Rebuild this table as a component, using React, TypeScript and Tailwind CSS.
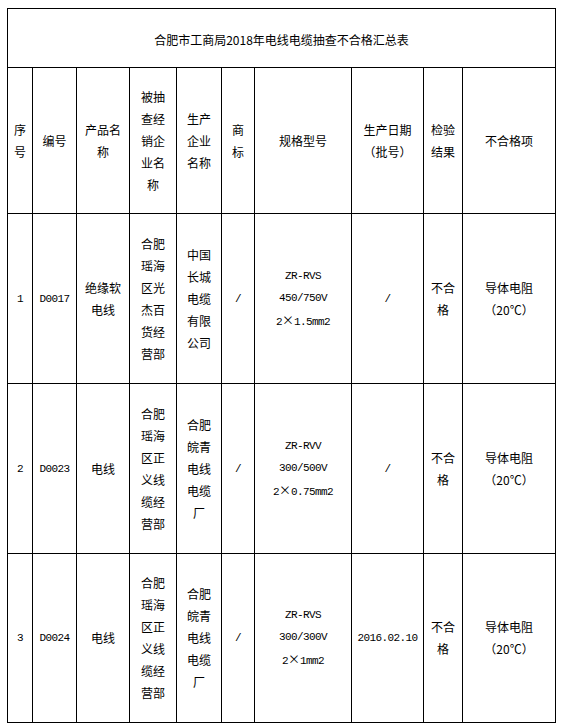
import { Fragment } from "react";

const cjk = "font-['Noto_Sans_CJK_SC',sans-serif]";
const mono = "font-['Liberation_Mono','Noto_Sans_CJK_SC',monospace] text-[11px] tracking-[-0.6px]";

type Row = {
  no: string;
  code: string;
  product: string[];
  seller: string[];
  maker: string[];
  brand: string;
  spec: React.ReactNode[];
  date: string;
  result: string[];
  defect: string[];
};

const X = <span className={`${cjk} text-[12px] tracking-normal`}>×</span>;

const rows: Row[] = [
  {
    no: "1",
    code: "D0017",
    product: ["绝缘软", "电线"],
    seller: ["合肥", "瑶海", "区光", "杰百", "货经", "营部"],
    maker: ["中国", "长城", "电缆", "有限", "公司"],
    brand: "/",
    spec: ["ZR-RVS", "450/750V", <>2{X}1.5mm2</>],
    date: "/",
    result: ["不合", "格"],
    defect: ["导体电阻", "（20℃）"],
  },
  {
    no: "2",
    code: "D0023",
    product: ["电线"],
    seller: ["合肥", "瑶海", "区正", "义线", "缆经", "营部"],
    maker: ["合肥", "皖青", "电线", "电缆", "厂"],
    brand: "/",
    spec: ["ZR-RVV", "300/500V", <>2{X}0.75mm2</>],
    date: "/",
    result: ["不合", "格"],
    defect: ["导体电阻", "（20℃）"],
  },
  {
    no: "3",
    code: "D0024",
    product: ["电线"],
    seller: ["合肥", "瑶海", "区正", "义线", "缆经", "营部"],
    maker: ["合肥", "皖青", "电线", "电缆", "厂"],
    brand: "/",
    spec: ["ZR-RVS", "300/300V", <>2{X}1mm2</>],
    date: "2016.02.10",
    result: ["不合", "格"],
    defect: ["导体电阻", "（20℃）"],
  },
];

function Cell({ lines, latin }: { lines: React.ReactNode[]; latin?: boolean }) {
  return (
    <div className="flex flex-col items-center justify-center bg-white text-center leading-[22px] text-black">
      {lines.map((l, i) => (
        <div key={i} className={latin ? mono : `${cjk} text-[12px]`}>
          {l}
        </div>
      ))}
    </div>
  );
}

const headers: string[][] = [
  ["序", "号"],
  ["编号"],
  ["产品名", "称"],
  ["被抽", "查经", "销企", "业名", "称"],
  ["生产", "企业", "名称"],
  ["商", "标"],
  ["规格型号"],
  ["生产日期", "（批号）"],
  ["检验", "结果"],
  ["不合格项"],
];

export default function App() {
  return (
    <div className="min-h-[723px] bg-white pl-[7px] pt-[8px]">
      <div className="grid w-[549px] grid-cols-[24px_43px_52px_46px_44px_32px_96px_71px_38px_92px] grid-rows-[58px_145px_169px_169px_168px] gap-px bg-black p-px">
        <div className={`col-span-10 flex items-center justify-center bg-white pt-[3px] text-[12px] text-black ${cjk}`}>
          合肥市工商局2018年电线电缆抽查不合格汇总表
        </div>
        {headers.map((h, i) => (
          <Cell key={i} lines={h} />
        ))}
        {rows.map((r) => (
          <Fragment key={r.no}>
            <Cell lines={[r.no]} latin />
            <Cell lines={[r.code]} latin />
            <Cell lines={r.product} />
            <Cell lines={r.seller} />
            <Cell lines={r.maker} />
            <Cell lines={[r.brand]} latin />
            <Cell lines={r.spec} latin />
            <Cell lines={[r.date]} latin />
            <Cell lines={r.result} />
            <Cell lines={r.defect} />
          </Fragment>
        ))}
      </div>
    </div>
  );
}
